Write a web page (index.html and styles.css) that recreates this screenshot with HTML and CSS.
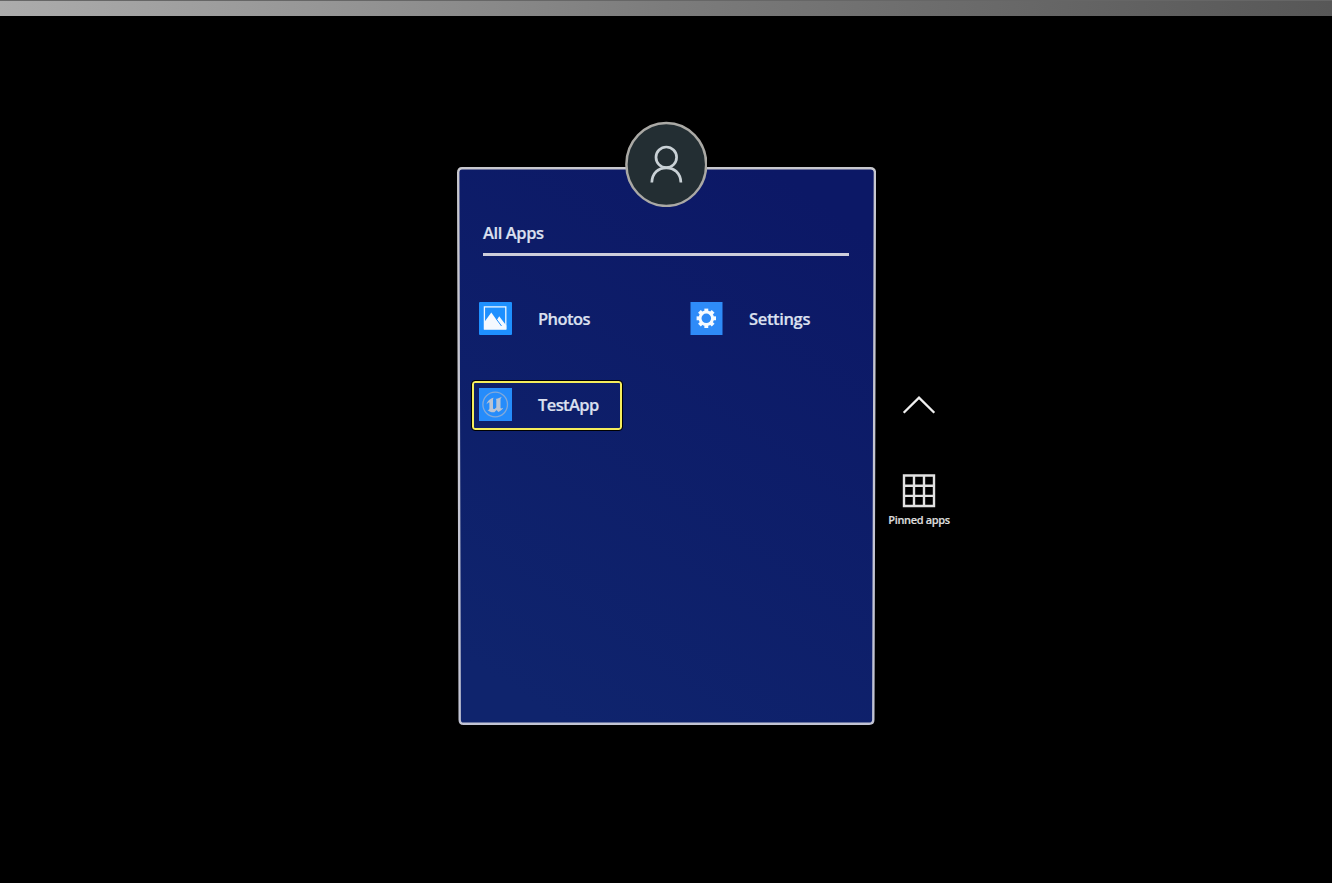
FILE: index.html
```html
<!DOCTYPE html>
<html lang="en">
<head>
<meta charset="utf-8">
<title>All Apps</title>
<link rel="stylesheet" href="styles.css">
</head>
<body>
<div class="topbar"></div>
<main class="stage">
  <section class="panel">
    <svg class="frame" viewBox="0 0 419 558" aria-hidden="true">
      <defs>
        <linearGradient id="fill" x1="0.75" y1="0" x2="0.25" y2="1"><stop offset="0" stop-color="#0c1866"/><stop offset="1" stop-color="#0f246d"/></linearGradient>
        <linearGradient id="edge" x1="0" y1="0" x2="0" y2="1"><stop offset="0" stop-color="#c8c8ce"/><stop offset="1" stop-color="#c2c4d4"/></linearGradient>
      </defs>
      <path d="M5 1.300H413.500Q417.900 1.500 417.900 5.500L416.300 552.800Q416.300 556.800 412.300 556.800H6.500Q2.700 556.800 2.700 552.800L1.200 5.500Q1.200 1.300 5 1.300Z" fill="url(#fill)" stroke="url(#edge)" stroke-width="2.400"/>
    </svg>
    <div class="avatar">
      <svg viewBox="0 0 82 86" width="82" height="86">
        <ellipse cx="41.300" cy="43.400" rx="39.900" ry="41.500" fill="#232e33" stroke="#aaa9a5" stroke-width="2.500"/>
        <circle cx="41.300" cy="36.300" r="10.300" fill="none" stroke="#c9d1d6" stroke-width="2.700"/>
        <path d="M26.800 61.500C27.200 52 33.500 46.800 41.300 46.800S55.500 52 55.900 61.500" fill="none" stroke="#c9d1d6" stroke-width="2.700"/>
      </svg>
    </div>
    <h1 class="title"><span class="title-text">All Apps</span></h1>
    <div class="apps">
      <div class="app">
        <svg class="tile" viewBox="0 0 33 33"><rect width="33" height="33" rx="1" fill="#1e90ff"/><rect x="5.400" y="4.900" width="21.400" height="22" fill="none" stroke="#eef6ff" stroke-width="1.300"/><path d="M5 20.500L12.300 10.400L16.200 16L17.700 18.300L20.200 14.300L23 18L27.300 23.500V27.500H5Z" fill="#f4f9ff"/><path d="M17.700 17.500L22.500 24" stroke="#1e90ff" stroke-width="1"/></svg>
        <span class="label photos">Photos</span>
      </div>
      <div class="app">
        <svg class="tile" viewBox="0 0 33 33"><rect x="0.500" width="32" height="33" fill="#2e8bf8"/><g transform="translate(16.300 16.300)" fill="none" stroke="#f6faff"><circle r="6.300" stroke-width="3"/><g stroke-width="3.900"><path id="tooth" d="M0-6.500V-9.700"/><use href="#tooth" transform="rotate(45)"/><use href="#tooth" transform="rotate(90)"/><use href="#tooth" transform="rotate(135)"/><use href="#tooth" transform="rotate(180)"/><use href="#tooth" transform="rotate(225)"/><use href="#tooth" transform="rotate(270)"/><use href="#tooth" transform="rotate(315)"/></g></g></svg>
        <span class="label settings">Settings</span>
      </div>
      <div class="app selected">
        <svg class="tile" viewBox="0 0 33 33"><rect width="33" height="33" fill="#258cfb"/><circle cx="16.200" cy="16.500" r="12.300" fill="none" stroke="#82a9da" stroke-width="1.300"/><path d="M7.500 16.500C8.200 12.700 11.500 10.500 14.700 9.700C13.900 10.600 14 11.200 14 12V19.800C14 20.900 14.800 21.300 15.600 20.900L17.300 19.500V12.300C17.300 11.300 16.800 11 16.300 11.100C18.300 10.400 20.400 9.900 23 8.700C21.900 9.800 21.500 10.500 21.500 11.600V19.500C21.500 20.900 22 20.900 24.200 19.800C23.200 21.900 21.200 23.200 19.400 24L17.500 22.100L15.400 24.300C12.400 24.500 10.400 23.700 8.500 21.900C9.900 22.100 10.400 21.800 10.400 20.600V14.900C10.400 13.600 9 14.900 7.500 16.500Z" fill="#b9c3d3"/></svg>
        <span class="label testapp">TestApp</span>
      </div>
    </div>
  </section>
  <aside class="side">
    <svg class="chevron" viewBox="0 0 34 20"><path d="M1.700 17.800L17 2.600L32.300 17.800" fill="none" stroke="#f0f0f0" stroke-width="2.300"/></svg>
    <svg class="grid-icon" viewBox="0 0 36 36"><path d="M3 2.500H33V33H3ZM13 2.500V33M23 2.500V33M3 12.700H33M3 22.900H33" fill="none" stroke="#e2e2e2" stroke-width="2.400"/></svg>
    <span class="pinned">Pinned apps</span>
  </aside>
</main>
</body>
</html>
```
FILE: styles.css
```css
* { box-sizing: border-box; }
body {
  margin: 0;
  height: 883px;
  overflow: hidden;
  background: #000;
  color: #dce0ef;
  font-family: "Open Sans", "Noto Sans", sans-serif;
}
.topbar {
  height: 16px;
  background: linear-gradient(90deg, #acacac 0%, #979797 23%, #7c7c7c 50%, #656565 80%, #575757 100%);
  border-top: 1px solid #666;
}
.stage {
  display: flex;
  padding: 151px 0 0 457px;
}
.panel {
  position: relative;
  width: 419px;
  height: 558px;
  padding: 53px 26px 0;
}
.frame {
  position: absolute;
  inset: 0;
  width: 419px;
  height: 558px;
}
.avatar {
  position: absolute;
  left: 168px;
  top: -46px;
  height: 86px;
}
.title {
  position: relative;
  height: 36px;
  width: 366px;
  margin: 0;
  border-bottom: 3px solid #cdcedb;
  font-size: 16.500px;
  font-weight: 600;
  line-height: 26px;
}
.title-text {
  letter-spacing: -0.400px;
  -webkit-text-stroke: 0.200px;
}
.apps {
  position: relative;
  display: grid;
  grid-template-columns: 211px 180px;
  grid-template-rows: 49px 49px;
  row-gap: 37px;
  margin: 39px 0 0 -11px;
}
.app {
  display: flex;
  align-items: flex-start;
  width: 150px;
  padding: 7px 0 0 7px;
}
.selected {
  border: 2px solid #f5ed5c;
  border-radius: 3px;
  padding: 5px 0 0 5px;
  outline: 1px solid #000;
}
.tile {
  width: 33px;
  height: 33px;
  flex: none;
}
.label {
  margin: 5px 0 0 26px;
  font-size: 16.500px;
  font-weight: 600;
  line-height: 24px;
  white-space: nowrap;
  -webkit-text-stroke: 0.200px;
}
.photos { letter-spacing: -0.550px; }
.settings { letter-spacing: -0.350px; }
.testapp { letter-spacing: -0.600px; }
.side {
  display: flex;
  flex-direction: column;
  align-items: center;
  width: 86px;
  padding-top: 228px;
}
.chevron { width: 34px; height: 20px; }
.grid-icon { width: 36px; height: 36px; margin-top: 58px; }
.pinned {
  margin-top: 3px;
  color: #ddd;
  font-size: 11px;
  font-weight: 600;
  line-height: 16px;
  letter-spacing: -0.350px;
  white-space: nowrap;
  -webkit-text-stroke: 0.200px;
}
```
